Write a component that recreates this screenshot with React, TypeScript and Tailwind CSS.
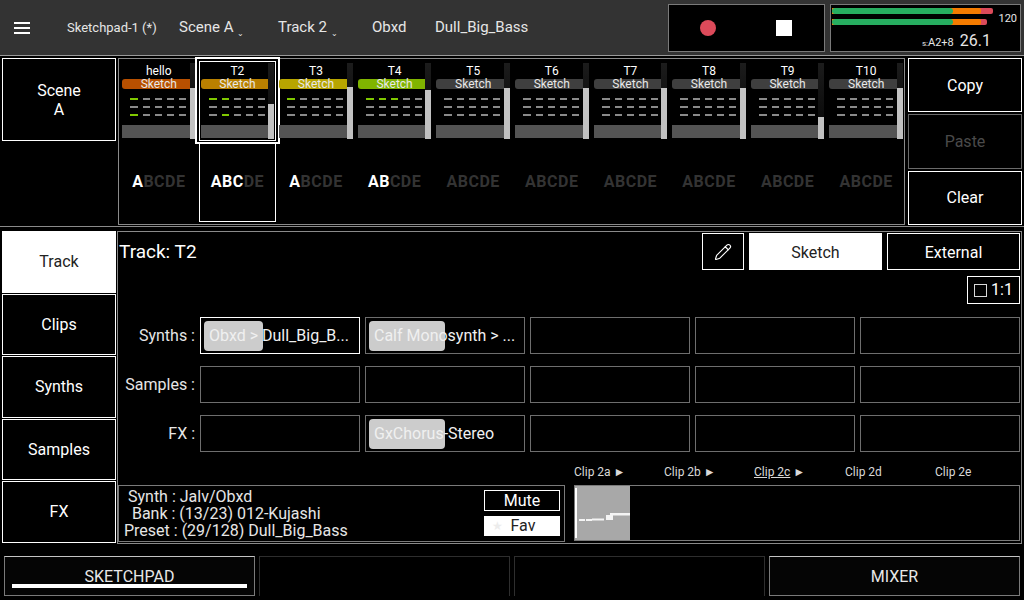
import { Pencil } from 'lucide-react'

const tracks = [
  { name: 'hello', color: 'bg-[#b85000]', slider: 'h-[51px]', on: [[0], [], [0]], clips: 1 },
  { name: 'T2', color: 'bg-[#b98000]', slider: 'h-[35px]', on: [[0, 1], [], [1]], clips: 3 },
  { name: 'T3', color: 'bg-[#b8a500]', slider: 'h-[52px]', on: [[0], [], []], clips: 1 },
  { name: 'T4', color: 'bg-[#80b400]', slider: 'h-[49px]', on: [[0, 1, 2], [], []], clips: 2 },
  { name: 'T5', color: 'bg-[#3f3f3f]', slider: 'h-[51px]', on: [[], [], []], clips: 0 },
  { name: 'T6', color: 'bg-[#3f3f3f]', slider: 'h-[51px]', on: [[], [], []], clips: 0 },
  { name: 'T7', color: 'bg-[#3f3f3f]', slider: 'h-[51px]', on: [[], [], []], clips: 0 },
  { name: 'T8', color: 'bg-[#3f3f3f]', slider: 'h-[51px]', on: [[], [], []], clips: 0 },
  { name: 'T9', color: 'bg-[#3f3f3f]', slider: 'h-[22px]', on: [[], [], []], clips: 0 },
  { name: 'T10', color: 'bg-[#3f3f3f]', slider: 'h-[51px]', on: [[], [], []], clips: 0 },
]

const rows = [
  { label: 'Synths :', cells: [{ text: 'Obxd > Dull_Big_B...', pill: 'w-[59px]', active: true }, { text: 'Calf Monosynth > ...', pill: 'w-[76px]' }, {}, {}, {}] },
  { label: 'Samples :', cells: [{}, {}, {}, {}, {}] },
  { label: 'FX :', cells: [{}, { text: 'GxChorus-Stereo', pill: 'w-[76px]' }, {}, {}, {}] },
]

const tabs = ['Track', 'Clips', 'Synths', 'Samples', 'FX']

const clips = [
  { name: 'Clip 2a', arrow: true, cls: 'w-[90px]' },
  { name: 'Clip 2b', arrow: true, cls: 'w-[90px]' },
  { name: 'Clip 2c', arrow: true, cls: 'w-[91px]', under: true },
  { name: 'Clip 2d', cls: 'w-[90px]' },
  { name: 'Clip 2e', cls: 'w-[60px]' },
]

function TrackColumn({ t, selected }: { t: (typeof tracks)[number]; selected: boolean }) {
  return (
    <div className="relative flex flex-col h-full">
      <div className="h-[16px] text-center text-[12px] leading-[16px] text-white">{t.name}</div>
      <div className={`h-[10px] rounded-[3px] text-center text-[12px] leading-[10px] text-[#e8e8e8] ${t.color}`}>Sketch</div>
      <div className="flex flex-col gap-[6px] pl-2 pt-[9px]">
        {t.on.map((row, r) => (
          <div key={r} className="flex gap-[5px]">
            {[0, 1, 2, 3, 4].map((d) => (
              <div key={d} className={`h-[2px] ${d === 0 ? 'w-[8px]' : 'w-[7px]'} ${row.includes(d) ? 'bg-[#80c800]' : 'bg-[#8a8a8a]'}`} />
            ))}
          </div>
        ))}
      </div>
      <div className="mt-[9px] h-[13px] bg-[#545454]" />
      {/* volume slider, sits over the tag and the bar */}
      <div className="absolute right-0 top-0 w-[6px] h-[76px] flex flex-col justify-end bg-gradient-to-b from-[#1c1c1c] to-[#060606]">
        <div className={`bg-white/75 ${t.slider}`} />
      </div>
      <div className="flex-1 flex items-center justify-center pt-[5px] text-[16px] font-bold tracking-[0.5px]">
        {['A', 'B', 'C', 'D', 'E'].map((l, i) => (
          <span key={l} className={i < t.clips ? 'text-white' : 'text-[#333333]'}>{l}</span>
        ))}
      </div>
      {selected && (
        <>
          <div className="absolute left-[-6px] right-[-6px] top-[-6px] h-[87px] border-2 border-white" />
          <div className="absolute left-[-2px] right-[-2px] top-[-2px] h-[80px] border border-white" />
          <div className="absolute left-[-2px] right-[-2px] top-[81px] bottom-[-1px] border border-white border-t-0" />
        </>
      )}
    </div>
  )
}

function Meter({ red }: { red: string }) {
  return (
    <div className="relative h-[6px] w-[161px]">
      <div className={`absolute left-0 top-0 h-full rounded-r-[2px] bg-[#dc4a5a] ${red}`} />
      <div className="absolute left-0 top-0 h-full w-[149px] rounded-r-[2px] bg-[#f57c00]" />
      <div className="absolute left-0 top-0 h-full w-[121px] rounded-[3px] bg-[#27ae60]" />
    </div>
  )
}

export default function App() {
  return (
    <div className="w-[1024px] h-[600px] overflow-hidden bg-black flex flex-col font-['Roboto',sans-serif] text-white">
      {/* top bar */}
      <header className="h-[56px] shrink-0 flex items-center bg-[#333333] border-b border-[#9a9a9a] text-[#e6e6e6]">
        <div className="ml-[14px] w-[16px] flex flex-col gap-[3px]">
          <div className="h-[2px] bg-white" />
          <div className="h-[2px] bg-white" />
          <div className="h-[2px] bg-white" />
        </div>
        <div className="ml-[37px] w-[112px] text-[13px]">Sketchpad-1 (*)</div>
        <div className="w-[99px] text-[15px]">Scene A <span className="relative top-[4px] text-[8px]">⌄</span></div>
        <div className="w-[94px] text-[15px]">Track 2 <span className="relative top-[4px] text-[8px]">⌄</span></div>
        <div className="w-[63px] text-[15px]">Obxd</div>
        <div className="w-[233px] text-[15px]">Dull_Big_Bass</div>
        <div className="w-[157px] h-[48px] flex items-center border border-[#7a7a7a] bg-black">
          <div className="ml-[31px] w-[16px] h-[16px] rounded-full bg-[#dc4a5a]" />
          <div className="ml-[60px] w-[16px] h-[16px] bg-white" />
        </div>
        <div className="ml-[5px] relative w-[191px] h-[48px] border border-[#7a7a7a] bg-black">
          <div className="flex flex-col gap-[5px] pl-[1px] pt-[3px]">
            <Meter red="w-[161px]" />
            <Meter red="w-[155px]" />
          </div>
          <div className="absolute right-[3px] top-[4px] text-[11px] leading-[20px] text-[#e6e6e6]">120</div>
          <div className="absolute right-[29px] bottom-[-2px] flex items-baseline gap-[6px] text-[#e6e6e6]">
            <span className="text-[11px]"><span className="text-[8px]">s:</span>A2+8</span>
            <span className="text-[16px]">26.1</span>
          </div>
        </div>
      </header>

      {/* tracks */}
      <section className="h-[171px] shrink-0 flex gap-[2px] pl-[2px] pr-[2px] pt-[2px] border-b border-[#8a8a8a]">
        <div className="w-[114px] h-[83px] flex items-center justify-center text-center text-[16px] leading-[19px] border border-white">Scene<br />A</div>
        <div className="w-[787px] h-[167px] border border-[#8a8a8a] pl-[3px] pr-[1px] pt-[4px] pb-[3px] grid grid-cols-10 gap-[5px]">
          {tracks.map((t, i) => (
            <TrackColumn key={t.name} t={t} selected={i === 1} />
          ))}
        </div>
        <div className="ml-[1px] w-[114px] h-[167px] flex flex-col gap-[2px] text-[16px]">
          <div className="flex-1 flex items-center justify-center pt-[1px] border border-white">Copy</div>
          <div className="flex-1 flex items-center justify-center pt-[1px] border border-[#6a6a6a] text-[#4a4a4a]">Paste</div>
          <div className="flex-1 flex items-center justify-center pt-[1px] border border-white">Clear</div>
        </div>
      </section>

      {/* track details */}
      <section className="mt-[4px] flex gap-[1px] pl-[2px]">
        <div className="w-[114px] flex flex-col gap-[1px]">
          {tabs.map((tab, i) => (
            <div key={tab} className={`h-[61.5px] flex items-center justify-center pt-[1px] text-[16px] border border-white ${i === 0 ? 'bg-white text-[#222222]' : ''}`}>{tab}</div>
          ))}
        </div>
        <div className="w-[905px] h-[313px] border border-[#8a8a8a] pl-[1px] pr-[1px] pt-[1px] flex flex-col">
          <div className="flex items-center h-[37px]">
            <div className="text-[19px] flex-1 pt-[2px]">Track: T2</div>
            <div className="w-[42px] h-[37px] flex items-center justify-center border border-white">
              <Pencil size={18} strokeWidth={1.5} />
            </div>
            <div className="ml-[5px] w-[133px] h-[37px] flex items-center justify-center pt-[2px] bg-white text-[#222222] text-[16px]">Sketch</div>
            <div className="ml-[5px] w-[133px] h-[37px] flex items-center justify-center pt-[2px] border border-white text-[16px]">External</div>
          </div>
          <div className="mt-[6px] flex justify-end">
            <div className="w-[53px] h-[28px] flex items-center justify-center gap-[4px] border border-white text-[16px]">
              <span className="w-[13px] h-[13px] border border-[#d8d8d8]" />1:1
            </div>
          </div>
          <div className="mt-[13px] flex flex-col gap-[12px]">
            {rows.map((row) => (
              <div key={row.label} className="flex items-center">
                <div className="w-[76px] pt-[1px] text-right text-[16px] text-[#e6e6e6]">{row.label}</div>
                <div className="ml-[5px] flex gap-[5px]">
                  {row.cells.map((cell, i) => (
                    <div key={i} className={`relative w-[160px] h-[37px] flex items-center pl-[8px] pt-[1px] text-[16px] border ${'active' in cell && cell.active ? 'border-white' : 'border-[#6e6e6e]'}`}>
                      {'pill' in cell && <div className={`absolute left-[3px] top-[3px] h-[30px] rounded-[4px] bg-[#cccccc] ${cell.pill}`} />}
                      {'text' in cell && <span className="relative whitespace-nowrap text-[#f0f0f0]">{cell.text}</span>}
                    </div>
                  ))}
                </div>
              </div>
            ))}
          </div>
          <div className="mt-[12px] ml-[455px] flex text-[12px] text-[#d8d8d8] h-[16px] leading-[16px]">
            {clips.map((c) => (
              <div key={c.name} className={c.cls}>
                <span className={c.under ? 'underline' : ''}>{c.name}</span>
                {c.arrow && <span> ►</span>}
              </div>
            ))}
          </div>
          <div className="mt-[5px] -ml-[1px] flex">
            <div className="w-[447px] h-[57px] border border-[#7a7a7a] relative flex">
              <div className="pl-[5px] pt-[2px] text-[16px] leading-[17px] text-[#e6e6e6] whitespace-pre">
                {' Synth : Jalv/Obxd\n  Bank : (13/23) 012-Kujashi\nPreset : (29/128) Dull_Big_Bass'}
              </div>
              <div className="absolute left-[365px] top-[4px] w-[76px] flex flex-col gap-[5px]">
                <div className="h-[21px] flex items-center justify-center border border-white text-[16px]">Mute</div>
                <div className="relative h-[20px] flex items-center justify-center pl-[2px] bg-white text-[#222222] text-[16px]">
                  <span className="absolute left-[8px] top-0 text-[12px] leading-[20px] text-[#ececec]">★</span>
                  Fav
                </div>
              </div>
            </div>
            <div className="ml-[9px] w-[446px] h-[56px] border border-[#7a7a7a]">
              <div className="relative w-[55px] h-full bg-[#a8a8a8]">
                <svg width="55" height="54" viewBox="0 0 55 54" className="absolute left-0 top-0">
                  <path d="M1 2v50" stroke="#ffffff" strokeWidth="2" />
                  <path d="M4 34h6M11 34h6M17 33.5h12" stroke="#f4f4f4" strokeWidth="2" fill="none" />
                  <rect x="31" y="29" width="7" height="5" fill="#f4f4f4" />
                  <rect x="35" y="27" width="20" height="2.5" fill="#f4f4f4" />
                </svg>
              </div>
            </div>
          </div>
        </div>
      </section>

      {/* global tabs */}
      <nav className="mt-[12px] flex gap-[4px] pl-[4px]">
        {['SKETCHPAD', '', '', 'MIXER'].map((label, i) => (
          <div key={i} className={`relative w-[251px] h-[40px] flex items-center justify-center pt-[1px] text-[16px] border ${label ? 'border-[#7a7a7a] border-t-[#c4c4c4] bg-[#050505]' : 'border-[#2e2e2e] border-b-0'}`}>
            <span className="text-[#e8e8e8]">{label}</span>
            {i === 0 && <div className="absolute left-[7px] right-[7px] bottom-[7px] h-[4px] bg-white" />}
          </div>
        ))}
      </nav>
    </div>
  )
}
